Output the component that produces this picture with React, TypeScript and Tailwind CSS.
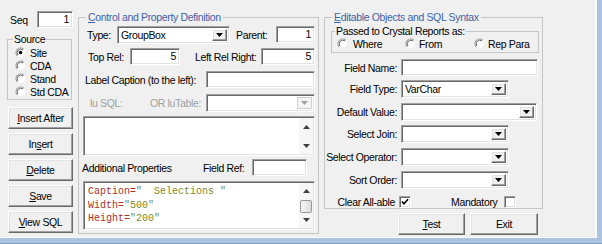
import React from "react";

const sunken =
  "bg-white border border-t-[#a0a0a0] border-l-[#a0a0a0] border-b-white border-r-white shadow-[inset_1px_1px_0_#696969,inset_-1px_-1px_0_#e3e3e3]";
const raised =
  "bg-[#f0f0f0] border border-t-white border-l-white border-b-[#696969] border-r-[#696969] shadow-[inset_-1px_-1px_0_#a0a0a0,inset_1px_1px_0_#e3e3e3]";

function TextBox({ w, value = "" }: { w: string; value?: string }) {
  return (
    <div className={`${sunken} ${w} h-[17px] flex items-center justify-end pr-[3px] leading-[13px]`}>
      {value}
    </div>
  );
}

function Arrow({ up = false, color = "#000" }: { up?: boolean; color?: string }) {
  return (
    <svg width="7" height="4" viewBox="0 0 7 4">
      <path d={up ? "M0 4h7L3.5 0z" : "M0 0h7L3.5 4z"} fill={color} />
    </svg>
  );
}

function Select({ w, value = "", disabled = false }: { w: string; value?: string; disabled?: boolean }) {
  return (
    <div className={`${sunken} ${w} h-[18px] flex p-[2px]`}>
      <span className="flex-1 pl-[1px] leading-[13px] truncate">{value}</span>
      <div
        className={`${disabled ? "bg-[#f4f4f4] border border-[#d0d0d0]" : raised} w-[15px] h-full flex items-center justify-center`}
      >
        <Arrow color={disabled ? "#a0a0a0" : "#000"} />
      </div>
    </div>
  );
}

function Radio({ checked = false }: { checked?: boolean }) {
  return (
    <svg width="11" height="11" viewBox="0 0 12 12" className="shrink-0">
      <circle cx="6" cy="6" r="5" fill="#fff" />
      <path d="M9.6 2.4 A5.1 5.1 0 0 0 2.4 9.6" stroke="#9a9a9a" strokeWidth="1.2" fill="none" />
      <path d="M8.8 3.2 A4 4 0 0 0 3.2 8.8" stroke="#505050" strokeWidth="1" fill="none" />
      {checked && <circle cx="6" cy="6" r="1.9" fill="#000" />}
    </svg>
  );
}

function Check({ checked = false }: { checked?: boolean }) {
  return (
    <div className={`${sunken} w-[12px] h-[12px] flex items-center justify-center`}>
      {checked && (
        <svg width="8" height="8" viewBox="0 0 8 8">
          <path d="M1 3.5L3 5.8L7 1.2" stroke="#000" strokeWidth="1.6" fill="none" />
        </svg>
      )}
    </div>
  );
}

function Btn({ w, children }: { w: string; children: React.ReactNode }) {
  return (
    <div className={`${raised} ${w} h-[22px] flex items-center justify-center`}>{children}</div>
  );
}

function VScroll({ thumb = false }: { thumb?: boolean }) {
  return (
    <div className="w-[14px] h-full flex flex-col items-center bg-[#f6f6f6]">
      <div className="h-[17px] flex items-center justify-center">
        <Arrow up color="#404040" />
      </div>
      {thumb && (
        <div className="mt-[2px] w-[12px] h-[13px] rounded-[2px] border border-[#979797] bg-gradient-to-r from-[#f6f6f6] to-[#dcdcdc]" />
      )}
      <div className="flex-1" />
      <div className="h-[17px] flex items-center justify-center">
        <Arrow color="#404040" />
      </div>
    </div>
  );
}

function FieldRow({ label, children, mt }: { label: string; children: React.ReactNode; mt: string }) {
  return (
    <div className={`${mt} flex items-center`}>
      <div className="w-[73px] flex justify-end pr-[1px]">
        <span className="whitespace-nowrap">{label}</span>
      </div>
      <div className="ml-[3px]">{children}</div>
    </div>
  );
}

export default function App() {
  return (
    <div className="w-[602px] h-[244px] bg-[#abc4df] border-b border-[#7d9dc4] font-['Liberation_Sans',Arial,sans-serif] text-[10.5px] tracking-[-0.35px] leading-[12px] text-black">
      <div className="w-[597px] h-[238px] bg-[#f0f0f0] border-r-2 border-b border-[#fafafa] flex items-start">
        {/* left column */}
        <div className="ml-[7px] w-[66px] flex flex-col">
          <div className="mt-[11px] flex items-center h-[17px]">
            <span className="w-[30px] pl-[3px]">Seq</span>
            <TextBox w="w-[36px]" value="1" />
          </div>
          <fieldset className="mt-[5px] w-[65px] border border-[#c5c5c5] pb-[1px]">
            <legend className="ml-[5px] px-[1px] leading-[13px]">Source</legend>
            {[
              ["Site", true],
              ["CDA", false],
              ["Stand", false],
              ["Std CDA", false],
            ].map(([t, c]) => (
              <div key={t as string} className="h-[13px] pl-[7px] flex items-center gap-[4px]">
                <Radio checked={c as boolean} />
                <span className="whitespace-nowrap">{t as string}</span>
              </div>
            ))}
          </fieldset>
          <div className="mt-[7px] ml-px flex flex-col gap-[4px]">
            <Btn w="w-[65px]">
              <span><u>I</u>nsert After</span>
            </Btn>
            <Btn w="w-[65px]">
              <span>In<u>s</u>ert</span>
            </Btn>
            <Btn w="w-[65px]">
              <span><u>D</u>elete</span>
            </Btn>
            <Btn w="w-[65px]">
              <span><u>S</u>ave</span>
            </Btn>
            <Btn w="w-[65px]">
              <span><u>V</u>iew SQL</span>
            </Btn>
          </div>
        </div>

        {/* control and property definition */}
        <fieldset className="ml-[5px] mt-[11px] w-[241px] h-[223px] border border-[#c5c5c5]">
          <legend className="ml-[7px] px-[2px] leading-[12px] text-[#3f63a6]">
            <u>C</u>ontrol and Property Definition
          </legend>
          <div className="mt-[3px] h-[17px] flex items-center">
            <span className="pl-[8px] w-[38px]">Type:</span>
            <Select w="w-[113px]" value="GroupBox" />
            <span className="ml-[6px] w-[40px]">Parent:</span>
            <TextBox w="w-[39px]" value="1" />
          </div>
          <div className="mt-[5px] h-[17px] flex items-center">
            <span className="pl-[9px] w-[51px]">Top Rel:</span>
            <TextBox w="w-[50px]" value="5" />
            <span className="ml-[15px] w-[66px] whitespace-nowrap">Left Rel Right:</span>
            <TextBox w="w-[54px]" value="5" />
          </div>
          <div className="mt-[6px] h-[17px] flex items-center">
            <span className="pl-[6px] w-[127px] whitespace-nowrap">Label Caption (to the left):</span>
            <TextBox w="w-[109px]" />
          </div>
          <div className="mt-[6px] h-[18px] flex items-center text-[#a0a0a0]">
            <span className="pl-[11px] w-[71px]">lu SQL:</span>
            <span className="w-[56px] whitespace-nowrap">OR luTable:</span>
            <Select w="w-[109px]" disabled />
          </div>
          <div className={`${sunken} mt-[4px] ml-[4px] w-[232px] h-[40px] flex justify-end p-[1px]`}>
            <VScroll />
          </div>
          <div className="mt-[3px] h-[17px] flex items-center">
            <span className="pl-[3px] w-[124px] whitespace-nowrap">Additional Properties</span>
            <span className="w-[49px] whitespace-nowrap">Field Ref:</span>
            <TextBox w="w-[55px]" />
          </div>
          <div className={`${sunken} mt-[5px] ml-[4px] w-[232px] h-[49px] flex p-[1px]`}>
            <div className="flex-1 pl-[3px] pt-[2px] font-['Liberation_Mono','Courier_New',monospace] text-[10px] tracking-normal leading-[13.5px] whitespace-pre">
              <div>
                <span className="text-[#a8322d]">Caption=</span>
                <span className="text-[#7d8a1f]">{'"  Selections "'}</span>
              </div>
              <div>
                <span className="text-[#a8322d]">Width=</span>
                <span className="text-[#7d8a1f]">"500"</span>
              </div>
              <div>
                <span className="text-[#a8322d]">Height=</span>
                <span className="text-[#7d8a1f]">"200"</span>
              </div>
            </div>
            <VScroll thumb />
          </div>
        </fieldset>

        {/* editable objects */}
        <div className="ml-[5px] w-[220px] flex flex-col">
          <fieldset className="mt-[11px] w-[219px] h-[198px] border border-[#c5c5c5]">
            <legend className="ml-[7px] px-[2px] leading-[12px] text-[#3f63a6]">
              <u>E</u>ditable Objects and SQL Syntax
            </legend>
            <fieldset className="mt-[2px] ml-[6px] w-[208px] h-[28px] border border-[#c5c5c5]">
              <legend className="ml-[3px] px-[1px] leading-[12px]">Passed to Crystal Reports as:</legend>
              <div className="h-[13px] pl-[5px] flex items-center">
                <div className="w-[68px] flex items-center gap-[5px]">
                  <Radio />
                  <span>Where</span>
                </div>
                <div className="w-[69px] flex items-center gap-[3px]">
                  <Radio />
                  <span>From</span>
                </div>
                <div className="flex items-center gap-[3px]">
                  <Radio />
                  <span className="whitespace-nowrap">Rep Para</span>
                </div>
              </div>
            </fieldset>
            <FieldRow label="Field Name:" mt="mt-[6px]">
              <TextBox w="w-[137px]" />
            </FieldRow>
            <FieldRow label="Field Type:" mt="mt-[4px]">
              <Select w="w-[108px]" value="VarChar" />
            </FieldRow>
            <FieldRow label="Default Value:" mt="mt-[5px]">
              <Select w="w-[136px]" />
            </FieldRow>
            <FieldRow label="Select Join:" mt="mt-[4px]">
              <Select w="w-[108px]" />
            </FieldRow>
            <FieldRow label="Select Operator:" mt="mt-[5px]">
              <Select w="w-[108px]" />
            </FieldRow>
            <FieldRow label="Sort Order:" mt="mt-[5px]">
              <Select w="w-[108px]" />
            </FieldRow>
            <div className="mt-[6px] h-[13px] flex items-center">
              <div className="w-[70px] flex justify-end">
                <span className="whitespace-nowrap">Clear All-able</span>
              </div>
              <div className="ml-[4px]">
                <Check checked />
              </div>
              <span className="ml-[40px]">Mandatory</span>
              <div className="ml-[7px]">
                <Check />
              </div>
            </div>
          </fieldset>
          <div className="mt-[4px] ml-[74px] flex gap-[5px]">
            <Btn w="w-[67px]">
              <span><u>T</u>est</span>
            </Btn>
            <Btn w="w-[68px]">
              <span>Exit</span>
            </Btn>
          </div>
        </div>
      </div>
    </div>
  );
}
